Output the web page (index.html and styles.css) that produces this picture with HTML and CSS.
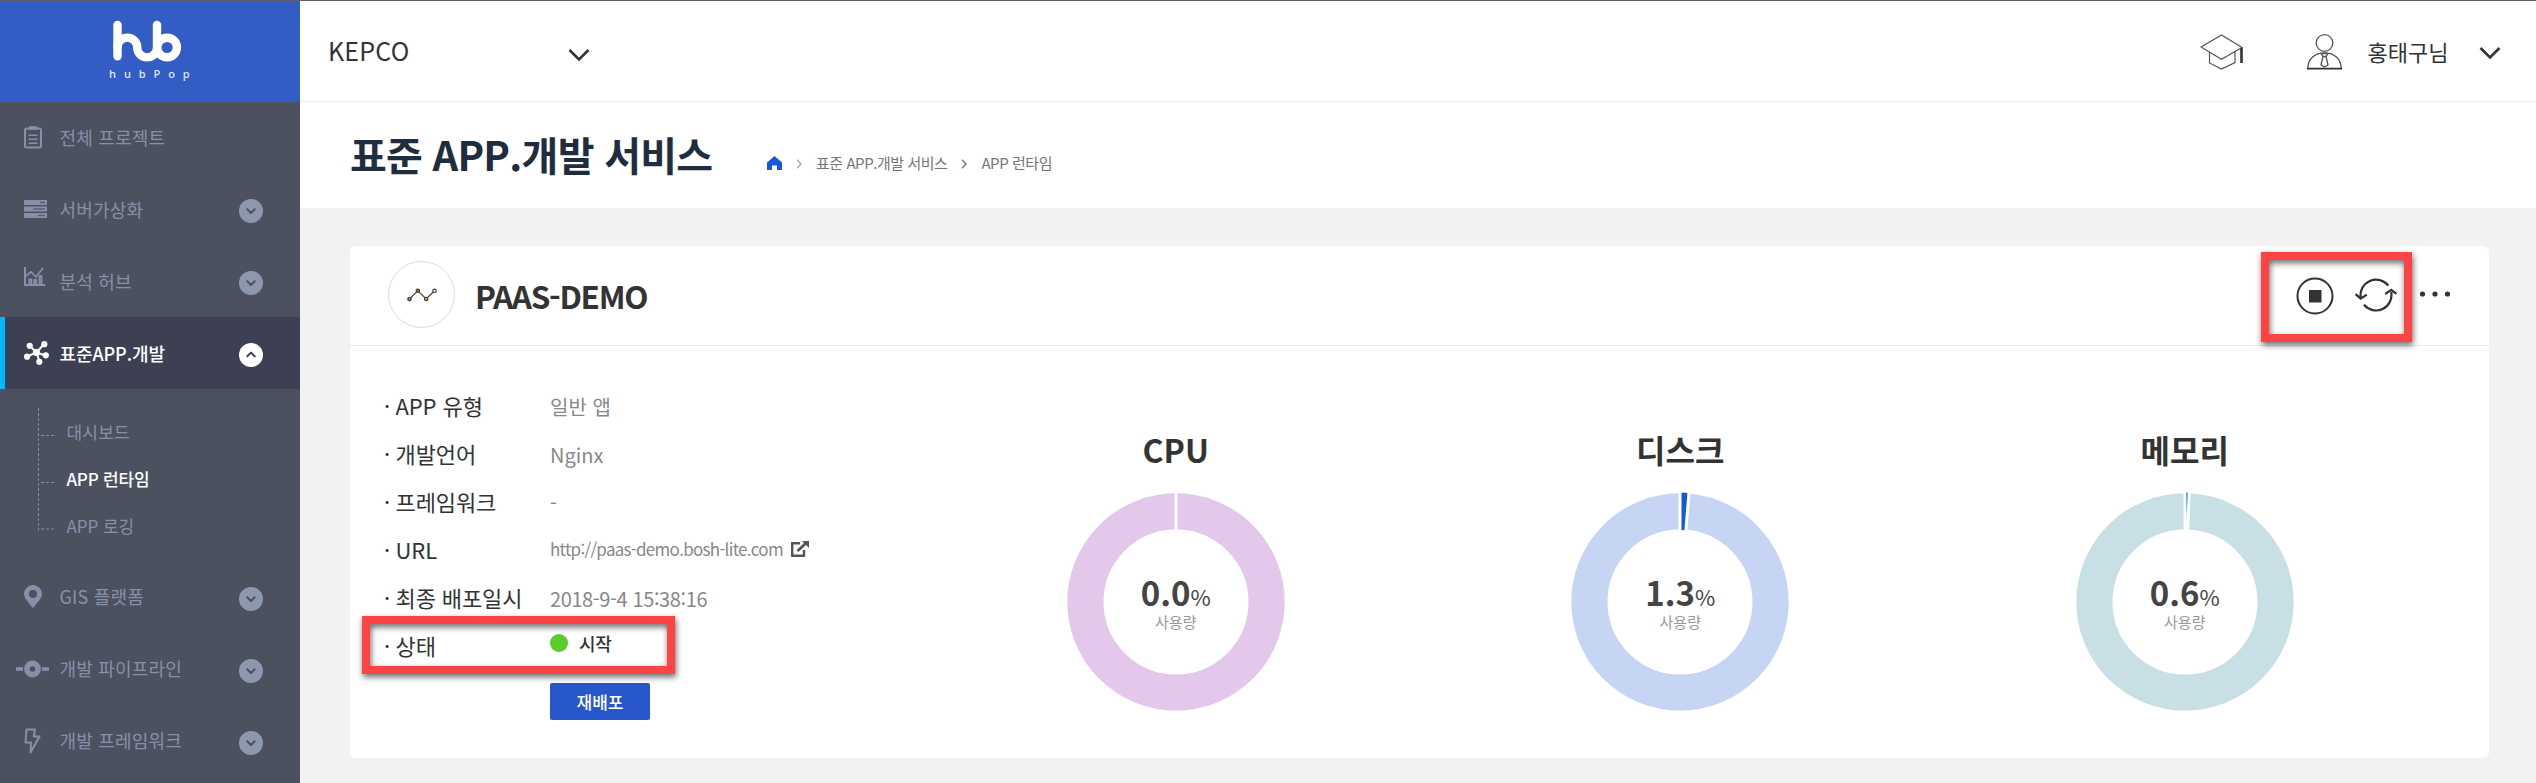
FILE: index.html
```html
<!DOCTYPE html>
<html lang="ko">
<head>
<meta charset="utf-8">
<title>표준 APP.개발 서비스</title>
<link rel="stylesheet" href="styles.css">
</head>
<body>
<svg class="defs" width="0" height="0" aria-hidden="true">
  <symbol id="down" viewBox="0 0 24 24"><circle cx="12" cy="12" r="12" fill="#8e97b0"/><path d="M8.3 10.3 12 14l3.7-3.7" fill="none" stroke="#4c515f" stroke-width="2" stroke-linecap="round" stroke-linejoin="round"/></symbol>
  <symbol id="up" viewBox="0 0 24 24"><circle cx="12" cy="12" r="12" fill="#fff"/><path d="M8.3 13.3 12 9.6l3.7 3.7" fill="none" stroke="#3c4052" stroke-width="2" stroke-linecap="round" stroke-linejoin="round"/></symbol>
</svg>
<div class="app">
  <aside class="sidebar">
    <div class="logo">
      <svg width="70" height="42" viewBox="112.5 20.5 70 42" fill="none" stroke="#fff" stroke-width="8.4" stroke-linecap="round"><path d="M118 25.4V56.8"/><path d="M118 48a9.8 9.8 0 0 1 19.7 0 9.8 9.8 0 0 0 19.8 0V25.4"/><circle cx="167.6" cy="48" r="9.8"/></svg>
      <span class="logo-text">hubPop</span>
    </div>
    <nav class="menu">
      <a class="item"><span class="ico"><svg width="18" height="23" viewBox="0 0 18 23" fill="none" stroke="#8790a9"><rect x="1" y="2.5" width="16" height="19" rx="1.5" stroke-width="2"/><path d="M5 2h8" stroke-width="3.6"/><path d="M4.5 9.2h9M4.5 13.2h9M4.5 17.2h9" stroke-width="1.6"/></svg></span><span class="label">전체 프로젝트</span></a>
      <a class="item"><span class="ico"><svg width="23" height="18" viewBox="0 0 23 18"><path d="M0 0h23v5H0zM0 6.5h23v5H0zM0 13h23v5H0z" fill="#8790a9"/><path d="M16 2.5h5M9 9h12M14 15.5h7" stroke="#5a6072" stroke-width="1.5"/></svg></span><span class="label">서버가상화</span><svg class="toggle"><use href="#down"/></svg></a>
      <a class="item"><span class="ico ico-up"><svg width="21" height="19" viewBox="0 0 21 19" fill="none" stroke="#8790a9"><path d="M1 0v18h20" stroke-width="2"/><path d="M2 9l5-4 5 5 7-9" stroke-width="1.7"/><path d="M5.4 17v-4.5h2V17M10.3 17v-4h2v4M15.5 17V9h2v8" stroke-width="1.8"/></svg></span><span class="label">분석 허브</span><svg class="toggle"><use href="#down"/></svg></a>
      <a class="item active"><span class="ico"><svg width="25" height="24" viewBox="0 0 25 24" fill="#fff" stroke="#fff" stroke-width="2"><path d="M12.5 11.5 6 5M12.5 11.5 20 3M12.5 11.5 3 15.5M12.5 11.5l9 3M12.5 11.5l3 9"/><g stroke="none"><circle cx="12.5" cy="11.5" r="3.6"/><circle cx="5.7" cy="4.8" r="3.1"/><circle cx="20.3" cy="3.2" r="3.1"/><circle cx="3.1" cy="15.7" r="3.1"/><circle cx="21.8" cy="14.3" r="3.1"/><circle cx="15.3" cy="20.8" r="3.1"/></g></svg></span><span class="label">표준APP.개발</span><svg class="toggle"><use href="#up"/></svg></a>
      <div class="sub">
        <svg class="tree" width="17" height="122" viewBox="0 0 17 122" fill="none" stroke="#8790a9" stroke-dasharray="3 2"><path d="M.5 0v122M3 27.5h13M3 74.5h13M3 121h13"/></svg>
        <ul class="sublist"><li>대시보드</li><li class="on">APP 런타임</li><li class="latin">APP 로깅</li></ul>
      </div>
      <a class="item"><span class="ico"><svg width="18" height="23" viewBox="0 0 18 23"><path fill="#8790a9" fill-rule="evenodd" d="M9 0a9 9 0 0 1 9 9c0 4.500-5 9-9 14C5 18 0 13.500 0 9a9 9 0 0 1 9-9zm0 5a4 4 0 1 0 0 8 4 4 0 0 0 0-8z"/></svg></span><span class="label">GIS 플랫폼</span><svg class="toggle"><use href="#down"/></svg></a>
      <a class="item"><span class="ico ico-wide"><svg width="33" height="18" viewBox="0 0 33 18" fill="none" stroke="#8790a9"><circle cx="16.500" cy="9" r="5.600" stroke-width="5.600"/><path d="M0 9h7M26 9h7" stroke-width="3.400"/></svg></span><span class="label">개발 파이프라인</span><svg class="toggle"><use href="#down"/></svg></a>
      <a class="item"><span class="ico"><svg width="17" height="26" viewBox="0 0 17 26" fill="none" stroke="#8790a9" stroke-width="2" stroke-linejoin="round"><path d="M2.500 1.500h8.500L9.800 8.500H15.500L6.500 24.500 7 14.500H1.500z"/></svg></span><span class="label">개발 프레임워크</span><svg class="toggle"><use href="#down"/></svg></a>
    </nav>
  </aside>
  <div class="main">
    <header class="topbar">
      <span class="org">KEPCO</span>
      <svg class="org-caret" width="22" height="14" viewBox="0 0 22 14" fill="none" stroke="#333" stroke-width="2.600"><path d="M1.500 2 11 11.500 20.500 2"/></svg>
      <svg class="cap" width="44" height="36" viewBox="0 0 44 36" fill="none" stroke="#555" stroke-width="1.200"><path d="M1 13 21.500 1 42 13.500 21.500 25.300zM9.500 18.500v10.500L21.500 35 35 28.500V18"/><path d="M41.500 14v15" stroke="#333" stroke-width="2.600"/></svg>
      <svg class="person" width="35" height="36" viewBox="0 0 35 36" fill="none" stroke="#555" stroke-width="1.300"><circle cx="17.500" cy="9" r="8.300"/><path d="M.8 34.500C.8 25 8 18.800 17.500 18.800S34.200 25 34.200 34.500M14 19.500h7l-2 3h-3zM16 22.500 14 31l3.500 2 3.500-2-2-8.500"/><path d="M0 34.700h35" stroke="#333" stroke-width="1.800"/></svg>
      <span class="user">홍태구님</span>
      <svg class="user-caret" width="22" height="14" viewBox="0 0 22 14" fill="none" stroke="#333" stroke-width="2.600"><path d="M1.500 2 11 11.500 20.500 2"/></svg>
    </header>
    <div class="titlebar">
      <h1>표준 APP.개발 서비스</h1>
      <div class="crumbs">
        <svg width="15" height="14" viewBox="0 0 15 14"><path d="M7.500 0 15 6.500V14H10V9.500H5V14H0V6.500z" fill="#1857dc"/></svg>
        <svg class="sep sep-light" width="6" height="10" viewBox="0 0 6 10"><path d="M1 .7 5 5 1 9.300"/></svg>
        <span>표준 APP.개발 서비스</span>
        <svg class="sep" width="6" height="10" viewBox="0 0 6 10"><path d="M1 .7 5 5 1 9.300"/></svg>
        <span>APP 런타임</span>
      </div>
    </div>
    <div class="content">
      <section class="card">
        <div class="card-head">
          <div class="badge"><svg width="30" height="14" viewBox="0 0 30 14" stroke="#444" stroke-width="1.200"><path d="M2.500 11 10.800 2.800 19.200 11 27.500 2.800" fill="none"/><circle cx="2.500" cy="11" r="1.700" fill="#1bb5b0"/><circle cx="10.800" cy="2.800" r="1.700" fill="#e0502a"/><circle cx="19.200" cy="11" r="1.700" fill="#f0a52a"/><circle cx="27.500" cy="2.800" r="1.700" fill="#fff"/></svg></div>
          <h2>PAAS-DEMO</h2>
          <div class="actions">
            <svg width="38" height="38" viewBox="0 0 38 38"><circle cx="19" cy="19" r="17.500" fill="none" stroke="#333" stroke-width="2"/><path d="M13 13h12.500v12.500H13z" fill="#333"/></svg>
            <svg class="refresh" width="42" height="34" viewBox="0 0 42 34" fill="none" stroke="#333" stroke-width="2.200"><path d="M33.300 7.700A15.500 15.500 0 0 0 5.700 19.500M9 26.800A15.500 15.500 0 0 0 36.200 14M.6 16.200 5.700 20.600 11.800 16.600M30.200 16 36.300 11.800 41.400 16"/></svg>
            <svg class="more" width="32" height="8" viewBox="0 0 32 8" fill="#333"><circle cx="3.500" cy="4" r="2.600"/><circle cx="16" cy="4" r="2.600"/><circle cx="28.500" cy="4" r="2.600"/></svg>
            <span class="mark mark-actions"></span>
          </div>
        </div>
        <div class="card-body">
          <dl class="info">
            <dt>APP 유형</dt><dd>일반 앱</dd>
            <dt>개발언어</dt><dd>Nginx</dd>
            <dt>프레임워크</dt><dd>-</dd>
            <dt>URL</dt><dd class="url"><span>http://paas-demo.bosh-lite.com</span><svg width="18" height="16" viewBox="0 0 18 16" fill="none" stroke="#555" stroke-width="2.400"><path d="M9 2.200H1.200V14.800H13V9"/><path d="M6.500 10 14.500 2.500" stroke-width="2.800"/><path d="M11 0h7v7z" fill="#555" stroke="none"/></svg></dd>
            <dt>최종 배포일시</dt><dd class="date">2018-9-4 15:38:16</dd>
            <dt>상태<span class="mark mark-status"></span></dt><dd class="status"><i class="dot"></i>시작</dd>
            <dd class="action"><button class="btn">재배포</button></dd>
          </dl>
          <div class="charts">
            <div class="chart">
              <h3>CPU</h3>
              <div class="donut"><svg width="220" height="220" viewBox="-110 -110 220 220"><circle r="90.600" fill="none" stroke="#e3c8ec" stroke-width="36.200"/><path d="M0-110V-71" stroke="#fff" stroke-width="3"/></svg>
              <div class="reading"><p class="value">0.0<small>%</small></p><p class="cap-label">사용량</p></div></div>
            </div>
            <div class="chart">
              <h3>디스크</h3>
              <div class="donut"><svg width="220" height="220" viewBox="-110 -110 220 220"><circle r="90.600" fill="none" stroke="#c7d5f4" stroke-width="36.200"/><path d="M0-109.500A109.500 109.500 0 0 1 8.940-109.100L5.880-71.760A72 72 0 0 0 0-72z" fill="#1458dc"/><path d="M0-110.500V-71M9.020-110.100 5.850-71.500" stroke="#fff" stroke-width="3"/></svg>
              <div class="reading"><p class="value">1.3<small>%</small></p><p class="cap-label">사용량</p></div></div>
            </div>
            <div class="chart">
              <h3>메모리</h3>
              <div class="donut"><svg width="220" height="220" viewBox="-110 -110 220 220"><circle r="90.600" fill="none" stroke="#c8dfe5" stroke-width="36.200"/><path d="M0-110.500V-71M4.160-110.400 2.700-71.500" stroke="#fff" stroke-width="3"/><path d="M1.300-109.500h1.500L1.600-85z" fill="#0d9fcb"/></svg>
              <div class="reading"><p class="value">0.6<small>%</small></p><p class="cap-label">사용량</p></div></div>
            </div>
          </div>
        </div>
      </section>
    </div>
  </div>
</div>
</body>
</html>
```
FILE: styles.css
```css
* { box-sizing: border-box; margin: 0; padding: 0; }
body {
  font-family: "Noto Sans CJK KR", "Noto Sans", sans-serif;
  color: #333;
  background: #f2f2f2;
  overflow: hidden;
}
svg { display: block; flex: none; }
.defs { position: absolute; }
.app { display: flex; height: 783px; border-top: 1px solid #5f606b; }

/* sidebar */
.sidebar { width: 300px; flex: none; background: #4c515f; overflow: hidden; }
.logo { height: 101px; background: #335cc5; display: flex; flex-direction: column; padding: 19px 0 0 109px; }
.logo svg { margin-left: 3px; }
.logo-text { font: 600 11px/14px "Open Sans", sans-serif; letter-spacing: 7.900px; color: #dfe6f7; margin-top: 5px; }
.menu { margin-top: -1px; }
.item { display: flex; align-items: center; height: 72px; padding: 0 37px 0 24px; font-size: 18px; letter-spacing: .2px; color: #8790a9; }
.item:first-child { padding-top: 1px; }
.ico { width: 35.500px; flex: none; }
.ico-up { margin-top: -9px; }
.ico-wide svg { margin-left: -8px; }
.label { flex: 1; line-height: 26px; margin-top: -1px; }
.item:first-child .label { margin-top: -2px; }
.toggle { width: 24px; height: 24px; margin-top: 4px; }
.active { background: #3c4052; color: #fff; box-shadow: inset 5px 0 #00b8ff; font-weight: 500; letter-spacing: -.100px; }
.sub { display: flex; height: 171.500px; padding: 19px 0 0 38px; }
.sublist { list-style: none; padding-left: 11.500px; font-size: 17px; line-height: 47px; letter-spacing: .2px; color: #8790a9; }
.sublist .on { color: #fff; font-weight: 500; letter-spacing: -.200px; }
.sublist .latin { letter-spacing: -.050px; }

/* top bar */
.main { flex: 1; min-width: 0; }
.topbar { height: 101px; background: #fff; border-bottom: 1px solid #ededed; display: flex; align-items: center; padding: 0 35px 0 28px; }
.org { width: 240px; font-size: 25px; line-height: 36px; letter-spacing: .2px; margin-top: -2px; }
.org-caret { margin-top: 8px; }
.cap { margin-left: auto; margin-top: 2px; }
.person { margin-left: 63px; margin-top: 2px; }
.user { margin-left: 26px; width: 87px; font-size: 22px; line-height: 32px; }
.user-caret { margin-left: 24.500px; margin-top: 3px; }

/* title */
.titlebar { height: 106px; background: #fff; display: flex; padding-left: 50px; }
h1 { width: 417px; font-size: 40px; line-height: 58px; font-weight: 700; letter-spacing: -.750px; color: #1f2d3f; padding-top: 23px; white-space: nowrap; }
.crumbs { display: flex; align-items: center; height: 22px; margin-top: 50px; font-size: 15px; letter-spacing: -.450px; color: #777; white-space: nowrap; }
.crumbs span { margin: -1px 0 0 14px; }
.sep { fill: none; stroke: #777; stroke-width: 1.400; margin: 2px 0 0 14px; }
.sep-light { stroke: #aaa; }

/* card */
.content { padding: 38px 47px 0 50px; }
.card { height: 512px; background: #fff; border-radius: 6px; }
.card-head { height: 100px; border-bottom: 1px solid #e9e9e9; display: flex; align-items: center; padding: 0 38px 0 38px; }
.badge { width: 67px; height: 67px; border: 1px solid #dcdcdc; border-radius: 50%; display: flex; align-items: center; justify-content: center; margin-top: -2px; }
h2 { font-size: 31.500px; line-height: 46px; font-weight: 700; letter-spacing: -1.300px; margin-left: 20px; margin-top: -1px; }
.actions { margin-left: auto; display: flex; align-items: center; position: relative; }
.refresh { margin: -2px 22px 0 21px; }
.more { margin-top: -3px; }
.mark { position: absolute; border: 8px solid #fd4343; filter: drop-shadow(1px 3px 3px rgba(0,0,0,.600)); }
.mark-actions { left: -35px; top: -25px; width: 151px; height: 90px; }
.card-body { display: flex; padding: 35px 52px 0 34px; }
.info { width: 539.500px; display: grid; grid-template-columns: 166px 1fr; grid-template-rows: repeat(6, 48px) auto; }
dt { position: relative; font-size: 22px; line-height: 48px; white-space: nowrap; letter-spacing: -.100px; }
dt::before { content: "·"; display: inline-block; width: 11.500px; }
dd { font-size: 20px; line-height: 51px; color: #888; }
.url { display: flex; align-items: center; gap: 8px; font-size: 17px; line-height: 48px; letter-spacing: -.720px; }
.date { white-space: nowrap; letter-spacing: -.400px; }
.status { display: flex; align-items: center; font-size: 18px; line-height: 26px; font-weight: 500; color: #333; padding-bottom: 5px; letter-spacing: -.300px; }
.dot { width: 18px; height: 18px; border-radius: 50%; background: #5acb2a; margin-right: 11px; }
.mark-status { left: -22px; top: -5px; width: 313px; height: 58px; z-index: 1; }
.action { grid-column: 2; padding-top: 14px; line-height: 0; }
.btn { width: 100px; height: 37px; border: 0; border-radius: 2px; background: #2857cc; color: #fff; font: 500 17px/24px "Noto Sans CJK KR", sans-serif; }
.charts { flex: 1; display: grid; grid-template-columns: repeat(3, 1fr); padding-top: 45px; }
.chart { display: flex; flex-direction: column; align-items: center; }
h3 { font-size: 32px; line-height: 46px; font-weight: 700; }
.donut { display: grid; margin-top: 20px; }
.donut > * { grid-area: 1 / 1; }
.reading { text-align: center; padding-top: 76px; }
.value { font-size: 33px; line-height: 48px; font-weight: 700; color: #444; }
.value small { font-size: 22px; font-weight: 400; }
.cap-label { font-size: 15px; line-height: 22px; color: #999; margin-top: -9px; }
```
